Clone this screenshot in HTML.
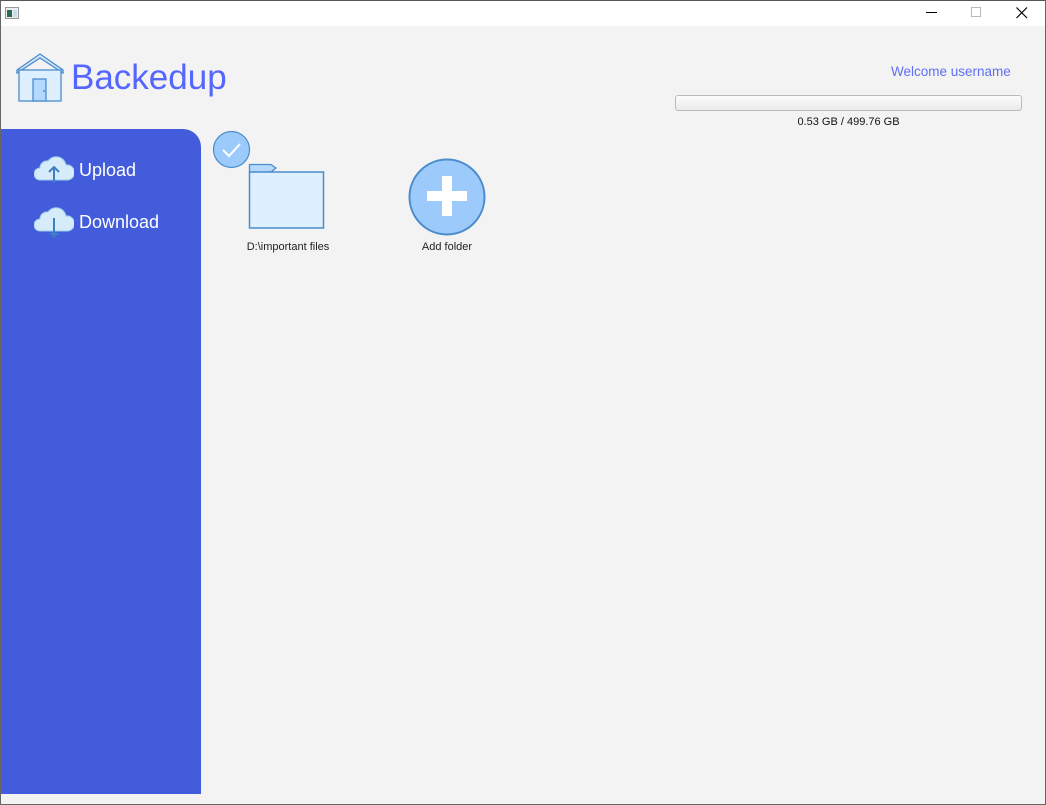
<!DOCTYPE html>
<html><head><meta charset="utf-8"><style>
*{margin:0;padding:0;box-sizing:border-box}
body{width:1046px;height:805px;overflow:hidden;background:#f3f3f3;font-family:"Liberation Sans",sans-serif;position:relative}
.frame{position:absolute;inset:0;border:1px solid #666;border-top-color:#555;pointer-events:none;z-index:10}
.title{position:absolute;left:0;top:0;width:1046px;height:26px;background:#fff}
.side{position:absolute;left:1px;top:129px;width:200px;height:665px;background:#435cdb;border-top-right-radius:18px}
.abs{position:absolute}
</style></head><body>
<div class="title">
 <svg class="abs" style="left:5px;top:7px" width="14" height="12"><rect x="0.5" y="0.5" width="13" height="11" fill="#eee" stroke="#999"/><rect x="2" y="3" width="5" height="7" fill="#2a6b5a"/><rect x="8" y="3" width="4" height="7" fill="#cde"/></svg>
 <svg class="abs" style="left:926px;top:12px" width="12" height="2"><rect width="11" height="1" fill="#000"/></svg>
 <svg class="abs" style="left:971px;top:7px" width="11" height="11"><rect x="0.5" y="0.5" width="9" height="9" fill="none" stroke="#bbb"/></svg>
 <svg class="abs" style="left:1016px;top:7px" width="12" height="12"><path d="M0.5 0.5L11 11M11 0.5L0.5 11" stroke="#000" stroke-width="1.2"/></svg>
</div>
<svg class="abs" style="left:15px;top:52px" width="52" height="50">
 <path d="M2 18L25 2L48 18L48 21L25 6L2 21Z" fill="#cfe6fb" stroke="#4a8ccc" stroke-width="1.3"/>
 <rect x="4" y="18" width="42" height="31" fill="#deefff" stroke="#4a8ccc" stroke-width="1.3"/>
 <rect x="18" y="27" width="13" height="22" fill="#b3d9ff" stroke="#4a8ccc" stroke-width="1.3"/>
 <circle cx="29" cy="39" r="1" fill="#4a8ccc"/>
</svg>
<div class="abs" style="left:71px;top:58px;font-size:35px;color:#5566ff">Backedup</div>
<div class="abs" style="left:891px;top:64px;font-size:13.5px;color:#5f6ff5">Welcome username</div>
<div class="abs" style="left:675px;top:95px;width:347px;height:16px;border:1px solid #bbb;border-radius:3px;background:linear-gradient(#fcfcfc,#eaeaea)"></div>
<div class="abs" style="left:675px;top:116px;width:347px;text-align:center;font-size:11px;color:#111">0.53 GB / 499.76 GB</div>
<div class="side"></div>
<svg class="abs" style="left:34px;top:154px" width="40" height="30"><path d="M6 26a6 6 0 0 1 0-12a7 7 0 0 1 8-7a10 10 0 0 1 18 4a6 6 0 0 1 2 15Z" fill="#d7ecfb" stroke="#9ccbea"/><path d="M20 29V13M15 18L20 13L25 18" stroke="#3c80c0" stroke-width="2" fill="none"/></svg>
<div class="abs" style="left:79px;top:160px;font-size:18px;color:#fff">Upload</div>
<svg class="abs" style="left:34px;top:205px" width="40" height="34"><path d="M6 26a6 6 0 0 1 0-12a7 7 0 0 1 8-7a10 10 0 0 1 18 4a6 6 0 0 1 2 15Z" fill="#d7ecfb" stroke="#9ccbea"/><path d="M20 13V29" stroke="#3c80c0" stroke-width="2"/><path d="M15 28L20 33L25 28Z" fill="#3c80c0"/></svg>
<div class="abs" style="left:79px;top:212px;font-size:18px;color:#fff">Download</div>
<svg class="abs" style="left:212px;top:131px" width="40" height="40"><circle cx="19.5" cy="18.5" r="18" fill="#9ccbfb" stroke="#4a8ccc" stroke-width="1.2"/><path d="M11 19L17 25L28 13" stroke="#fff" stroke-width="2" fill="none"/></svg>
<svg class="abs" style="left:248px;top:163px" width="78" height="67"><path d="M1.5 1.5H23L28 5L23 9H1.5Z" fill="#b3d9ff" stroke="#4a8ccc" stroke-width="1.3"/><rect x="1.5" y="9" width="74" height="56" fill="#deefff" stroke="#4a8ccc" stroke-width="1.5"/></svg>
<div class="abs" style="left:238px;top:241px;width:100px;text-align:center;font-size:11px;color:#222">D:\important files</div>
<svg class="abs" style="left:408px;top:158px" width="80" height="80"><circle cx="39" cy="39" r="37.5" fill="#9ccbfb" stroke="#4a8ccc" stroke-width="2"/><rect x="19" y="33" width="40" height="10" fill="#fff"/><rect x="34" y="18" width="10" height="40" fill="#fff"/></svg>
<div class="abs" style="left:397px;top:241px;width:100px;text-align:center;font-size:11px;color:#222">Add folder</div>
<div class="frame"></div>
</body></html>
